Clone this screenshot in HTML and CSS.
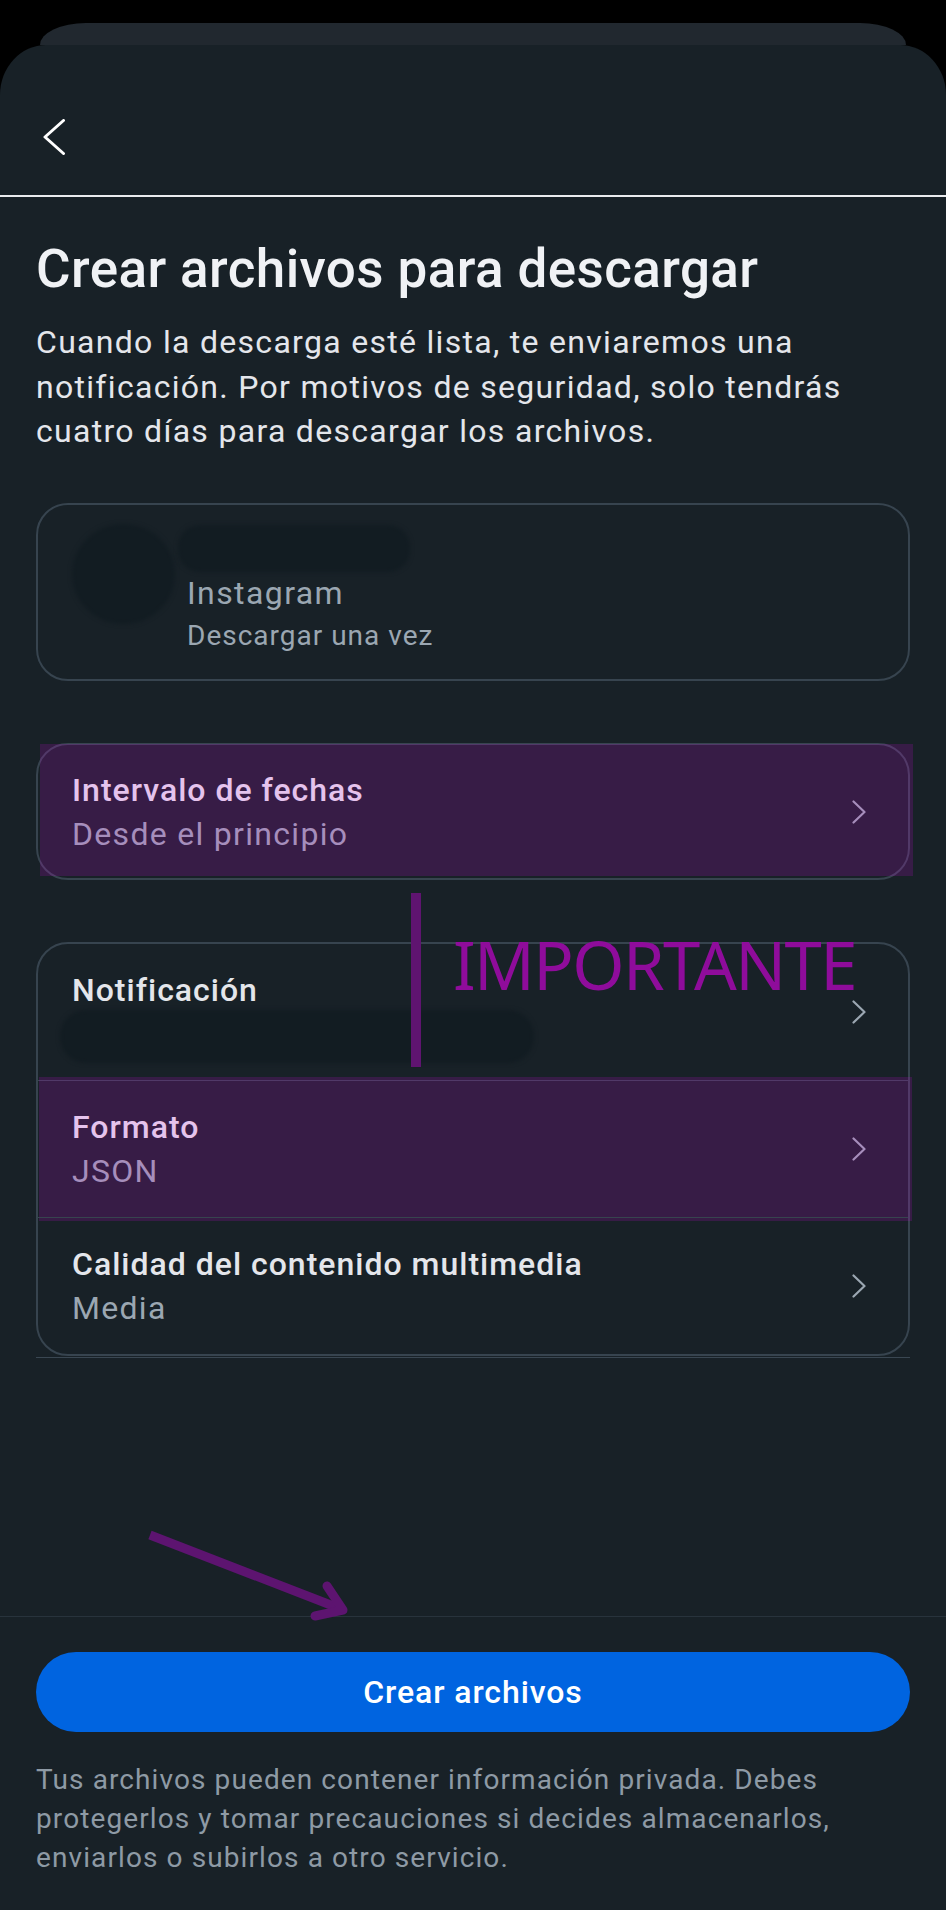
FILE: index.html
```html
<!DOCTYPE html>
<html lang="es">
<head>
<meta charset="utf-8">
<title>Crear archivos para descargar</title>
<link rel="stylesheet" href="styles.css">
</head>
<body>
<div class="screen">
  <div class="back-sheet"></div>
  <div class="sheet">
    <header class="topbar">
      <button class="back" aria-label="Atrás">
        <svg width="24" height="36" viewBox="0 0 24 36"><path d="M21.5 1.5 L3 18 L21.5 34.5" fill="none" stroke="#ffffff" stroke-width="3" stroke-linecap="round" stroke-linejoin="round"/></svg>
      </button>
    </header>
    <div class="rule"></div>

    <main class="content">
      <h1 class="title">Crear archivos para descargar</h1>
      <p class="intro">Cuando la descarga esté lista, te enviaremos una notificación. Por motivos de seguridad, solo tendrás cuatro días para descargar los archivos.</p>

      <div class="card source">
        <div class="avatar-redact"></div>
        <div class="source-text">
          <div class="name-redact"></div>
          <div class="source-app">Instagram</div>
          <div class="source-sub">Descargar una vez</div>
        </div>
      </div>

      <div class="card single">
        <div class="row">
          <div class="row-text">
            <div class="row-title">Intervalo de fechas</div>
            <div class="row-sub">Desde el principio</div>
          </div>
          <svg class="chev" width="14" height="24" viewBox="0 0 14 24"><path d="M1.5 1.5 L12.5 12 L1.5 22.5" fill="none" stroke="currentColor" stroke-width="2.2" stroke-linecap="round" stroke-linejoin="round"/></svg>
        </div>
        <div class="hl hl-single"></div>
      </div>

      <div class="card list">
        <div class="row">
          <div class="row-text">
            <div class="row-title">Notificación</div>
            <div class="sub-redact"></div>
          </div>
          <svg class="chev" width="14" height="24" viewBox="0 0 14 24"><path d="M1.5 1.5 L12.5 12 L1.5 22.5" fill="none" stroke="currentColor" stroke-width="2.2" stroke-linecap="round" stroke-linejoin="round"/></svg>
        </div>
        <div class="row">
          <div class="row-text">
            <div class="row-title">Formato</div>
            <div class="row-sub">JSON</div>
          </div>
          <svg class="chev" width="14" height="24" viewBox="0 0 14 24"><path d="M1.5 1.5 L12.5 12 L1.5 22.5" fill="none" stroke="currentColor" stroke-width="2.2" stroke-linecap="round" stroke-linejoin="round"/></svg>
          <div class="hl hl-row"></div>
        </div>
        <div class="row">
          <div class="row-text">
            <div class="row-title">Calidad del contenido multimedia</div>
            <div class="row-sub">Media</div>
          </div>
          <svg class="chev" width="14" height="24" viewBox="0 0 14 24"><path d="M1.5 1.5 L12.5 12 L1.5 22.5" fill="none" stroke="currentColor" stroke-width="2.2" stroke-linecap="round" stroke-linejoin="round"/></svg>
        </div>
      </div>
      <div class="list-rule"></div>
    </main>

    <footer class="footer">
      <button class="cta">Crear archivos</button>
      <p class="disclaimer">Tus archivos pueden contener información privada. Debes protegerlos y tomar precauciones si decides almacenarlos, enviarlos o subirlos a otro servicio.</p>
    </footer>

    <div class="mark-bar"></div>
    <div class="mark-text">IMPORTANTE</div>
    <svg class="mark-arrow" width="220" height="100" viewBox="0 0 220 100">
      <path d="M10 10 L201 84" fill="none" stroke="#5d1470" stroke-width="9"/>
      <path d="M187 61 L203 85 L175 91" fill="none" stroke="#5d1470" stroke-width="9" stroke-linecap="round" stroke-linejoin="round"/>
    </svg>
  </div>
</div>
</body>
</html>
```

FILE: styles.css
```css
* { box-sizing: border-box; }

html, body {
  margin: 0;
  padding: 0;
  background: #000000;
}

body {
  font-family: Roboto, "Noto Sans", "Liberation Sans", sans-serif;
  color: #e4e6eb;
}

.screen {
  width: 946px;
  height: 1910px;
  padding-top: 23px;
  display: flex;
  flex-direction: column;
  overflow: hidden;
}

.back-sheet {
  height: 22px;
  margin: 0 40px;
  background: #21282f;
  border-radius: 46px 46px 0 0 / 22px 22px 0 0;
  flex: none;
}

.sheet {
  position: relative;
  flex: 1;
  background: #182127;
  border-radius: 46px 46px 0 0 / 50px 50px 0 0;
  display: flex;
  flex-direction: column;
}

.topbar {
  height: 150px;
  padding: 74px 0 0 42px;
  flex: none;
}

.back {
  display: block;
  padding: 0;
  margin: 0;
  border: 0;
  background: none;
  width: 24px;
  height: 36px;
}

.back svg { display: block; }

.rule {
  height: 2px;
  background: #e9ebee;
  flex: none;
}

.content {
  padding: 0 36px;
}

.title {
  margin: 41px 0 0;
  font-size: 53px;
  line-height: 62px;
  font-weight: 500;
  color: #f0f2f5;
  letter-spacing: 0.4px;
}

.intro {
  margin: 20px 0 0;
  font-size: 32px;
  line-height: 44.5px;
  font-weight: 400;
  letter-spacing: 1.3px;
  color: #e4e6eb;
}

.card {
  position: relative;
  border: 2px solid #37444f;
  border-radius: 32px;
}

.source {
  margin-top: 49px;
  display: flex;
  align-items: flex-start;
  gap: 12px;
  padding: 20px 34px 21px 34px;
}

.avatar-redact {
  width: 103px;
  height: 100px;
  margin-top: -1px;
  border-radius: 50%;
  background: #121c22;
  filter: blur(2px);
  flex: none;
}

.source-text {
  display: flex;
  flex-direction: column;
}

.name-redact {
  width: 232px;
  height: 47px;
  margin-left: -9px;
  border-radius: 22px;
  background: #121c22;
  filter: blur(2px);
}

.source-app {
  font-size: 32px;
  line-height: 42px;
  letter-spacing: 1.4px;
  color: #9ba7b2;
}

.source-sub {
  font-size: 28px;
  line-height: 44px;
  letter-spacing: 1px;
  color: #9ba7b2;
}

.single {
  margin-top: 62px;
}

.list {
  margin-top: 62px;
}

.row {
  position: relative;
  display: flex;
  align-items: center;
  padding: 24px 42px 24px 34px;
}

.single .row {
  padding: 23px 42px 22px 34px;
}

.row + .row {
  border-top: 1px solid #37444f;
}

.row-text {
  flex: 1;
  display: flex;
  flex-direction: column;
}

.row-title {
  font-size: 32px;
  line-height: 44px;
  font-weight: 500;
  letter-spacing: 1px;
  color: #e4e6eb;
}

.row-sub {
  font-size: 32px;
  line-height: 44px;
  letter-spacing: 1.3px;
  color: #9ba7b2;
}

.sub-redact {
  width: 474px;
  height: 53px;
  margin: -2px 0 -7px -12px;
  border-radius: 26px;
  background: #121c22;
  filter: blur(2px);
}

.chev {
  display: block;
  color: #9ba7b2;
  flex: none;
}

.hl {
  position: absolute;
  background: rgba(232, 0, 250, 0.15);
  pointer-events: none;
}

.hl-single {
  top: -1px;
  left: 2px;
  right: -5px;
  bottom: 2px;
}

.hl-row {
  top: -4px;
  left: 1px;
  right: -4px;
  bottom: -4px;
}

.list-rule {
  height: 1px;
  margin-top: 1px;
  background: #3a4752;
}

.footer {
  margin-top: auto;
  border-top: 1px solid #28333c;
  padding: 35px 36px 33px;
}

.cta {
  display: block;
  width: 100%;
  height: 80px;
  border: 0;
  border-radius: 40px;
  background: #0064e0;
  color: #ffffff;
  font-family: Roboto, "Noto Sans", sans-serif;
  font-size: 32px;
  font-weight: 500;
  letter-spacing: 0.9px;
}

.disclaimer {
  margin: 28px 0 0;
  font-size: 28px;
  line-height: 39px;
  letter-spacing: 1.1px;
  color: #8e9aa5;
}

.mark-bar {
  position: absolute;
  left: 411px;
  top: 848px;
  width: 10px;
  height: 174px;
  background: #5f1470;
}

.mark-text {
  position: absolute;
  left: 453px;
  top: 886px;
  font-family: "Noto Sans", "Open Sans", sans-serif;
  font-size: 67px;
  line-height: 67px;
  letter-spacing: -1.6px;
  color: #8f0c9b;
  white-space: nowrap;
}

.mark-arrow {
  position: absolute;
  left: 140px;
  top: 1480px;
  overflow: visible;
}
```
